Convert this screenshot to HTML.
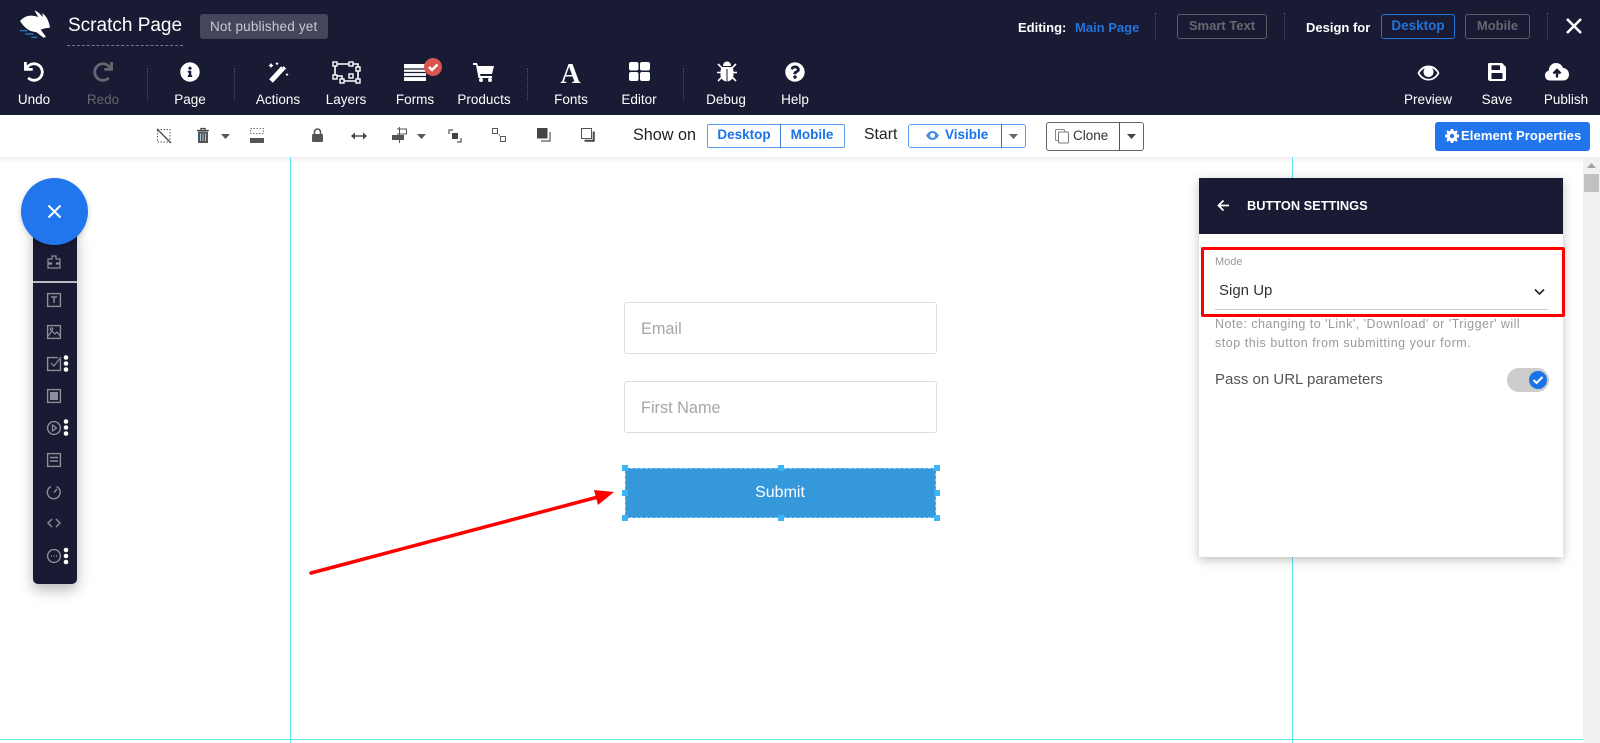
<!DOCTYPE html>
<html><head><meta charset="utf-8"><style>
html,body{margin:0;padding:0;width:1600px;height:743px;overflow:hidden;background:#fff;font-family:"Liberation Sans",sans-serif}
.a{position:absolute}
.t{position:absolute;white-space:nowrap;line-height:1}
.c{transform:translateX(-50%)}
.l{top:93px;font-size:13.5px;color:#fff;transform:translateX(-50%);position:absolute;white-space:nowrap;line-height:14px}
.sep{position:absolute;width:0;border-left:1px dotted #4f5066}
svg{position:absolute;overflow:visible}
.btn{position:absolute;box-sizing:border-box;border-radius:3px;text-align:center;font-weight:bold;white-space:nowrap}
</style></head><body>
<!-- top bar -->
<div class="a" style="left:0;top:0;width:1600px;height:115px;background:#191a33"></div>
<svg style="left:10px;top:5px" width="50" height="40" viewBox="0 0 150 120"><path d="M30 48C45 32 60 28 85 36C80 28 76 22 74 16C84 20 92 28 98 36C98 30 98 28 96 24C106 30 114 42 118 58L120 68L104 70L92 74C98 82 104 90 108 96L100 98L80 82L62 78C48 72 38 60 30 48Z" fill="#fff"/><path d="M30 77H52M46 87H70M64 97H82" stroke="#1f8fe0" stroke-width="3.5"/></svg>
<div class="t" style="left:68px;top:16px;font-size:19px;color:#fff">Scratch Page</div>
<div class="a" style="left:67px;top:45px;width:116px;border-top:1px dashed #77788a"></div>
<div class="a" style="left:200px;top:14px;width:128px;height:25px;background:#44465c;border-radius:3px"></div>
<div class="t" style="left:210px;top:19.5px;font-size:13.5px;color:#c8c9d2;letter-spacing:.18px">Not published yet</div>

<div class="t" style="left:1018px;top:21px;font-size:13px;font-weight:bold;color:#fff">Editing:</div>
<div class="t" style="left:1075px;top:21px;font-size:13px;font-weight:bold;color:#2274d8">Main Page</div>
<div class="sep" style="left:1155px;top:13px;height:26px"></div>
<div class="btn" style="left:1177px;top:14px;width:90px;height:25px;border:1px solid #5b5c66;color:#666770;font-size:13px;line-height:21px">Smart Text</div>
<div class="sep" style="left:1284px;top:13px;height:26px"></div>
<div class="t" style="left:1306px;top:21px;font-size:13px;font-weight:bold;color:#fff">Design for</div>
<div class="btn" style="left:1381px;top:14px;width:74px;height:25px;border:1px solid #2274d8;color:#2274d8;font-size:13.5px;line-height:21px">Desktop</div>
<div class="btn" style="left:1465px;top:14px;width:65px;height:25px;border:1px solid #5b5c66;color:#666770;font-size:13px;line-height:21px">Mobile</div>
<div class="sep" style="left:1547px;top:13px;height:26px"></div>
<svg style="left:1565px;top:17px" width="18" height="18"><path d="M2 2L16 16M16 2L2 16" stroke="#fff" stroke-width="2.6"/></svg>

<!-- toolbar icons -->
<svg style="left:24px;top:62px" width="20" height="20" viewBox="0 0 512 512"><path fill="#fff" d="M212.333 224.333H12c-6.627 0-12-5.373-12-12V12C0 5.373 5.373 0 12 0h48c6.627 0 12 5.373 12 12v78.112C117.773 39.279 184.26 7.47 258.175 8.007c136.906.994 246.448 111.623 246.157 248.532C504.041 393.258 393.12 504 256.333 504c-64.089 0-122.496-24.313-166.51-64.215-5.099-4.622-5.334-12.554-.467-17.42l33.967-33.967c4.474-4.474 11.662-4.717 16.401-.525C170.76 415.336 211.58 432 256.333 432c97.268 0 176-78.716 176-176 0-97.267-78.716-176-176-176-58.496 0-110.28 28.476-142.274 72.333h98.274c6.627 0 12 5.373 12 12v48c0 6.627-5.373 12-12 12z"/></svg>
<svg style="left:93px;top:62px;transform:scaleX(-1)" width="20" height="20" viewBox="0 0 512 512"><path fill="#66676f" d="M212.333 224.333H12c-6.627 0-12-5.373-12-12V12C0 5.373 5.373 0 12 0h48c6.627 0 12 5.373 12 12v78.112C117.773 39.279 184.26 7.47 258.175 8.007c136.906.994 246.448 111.623 246.157 248.532C504.041 393.258 393.12 504 256.333 504c-64.089 0-122.496-24.313-166.51-64.215-5.099-4.622-5.334-12.554-.467-17.42l33.967-33.967c4.474-4.474 11.662-4.717 16.401-.525C170.76 415.336 211.58 432 256.333 432c97.268 0 176-78.716 176-176 0-97.267-78.716-176-176-176-58.496 0-110.28 28.476-142.274 72.333h98.274c6.627 0 12 5.373 12 12v48c0 6.627-5.373 12-12 12z"/></svg>
<div class="sep" style="left:147px;top:68px;height:32px"></div>
<svg style="left:180px;top:62px" width="20" height="20" viewBox="0 0 512 512"><path fill="#fff" d="M256 8C119.043 8 8 119.083 8 256c0 136.997 111.043 248 248 248s248-111.003 248-248C504 119.083 392.957 8 256 8zm0 110c23.196 0 42 18.804 42 42s-18.804 42-42 42-42-18.804-42-42 18.804-42 42-42zm56 254c0 6.627-5.373 12-12 12h-88c-6.627 0-12-5.373-12-12v-24c0-6.627 5.373-12 12-12h12v-64h-12c-6.627 0-12-5.373-12-12v-24c0-6.627 5.373-12 12-12h64c6.627 0 12 5.373 12 12v100h12c6.627 0 12 5.373 12 12v24z"/></svg>
<div class="sep" style="left:234px;top:68px;height:32px"></div>
<svg style="left:268px;top:61px" width="21" height="21"><path d="M3 20L15 7" stroke="#fff" stroke-width="5"/><path d="M13 9.5L15.5 5L18.5 8Z" fill="#fff"/><path d="M3 2l1 1.5 1.5 1-1.5 1L3 7 2 5.5.5 4.5 2 3.5ZM9 1l.7 1 1 .7-1 .7-.7 1-.7-1-1-.7 1-.7ZM19 12l.6 1 1 .6-1 .6-.6 1-.6-1-1-.6 1-.6Z" fill="#fff"/></svg>
<svg style="left:332px;top:61px" width="30" height="23" fill="none"><path d="M3 3H26V14M3 3V15H10V20H26V8" stroke="#fff" stroke-width="1.6" fill="none"/><g fill="#191a33" stroke="#fff" stroke-width="1.4"><rect x="1" y="1" width="4" height="4"/><rect x="17" y="1" width="4" height="4"/><rect x="1" y="14" width="4" height="4"/><rect x="24" y="6" width="4" height="4"/><rect x="24" y="18" width="4" height="4"/><rect x="8" y="18" width="4" height="4"/><rect x="17" y="13" width="4" height="4"/></g></svg>
<svg style="left:404px;top:58px" width="38" height="25"><path fill="#fff" d="M0 6H22V23H0Z"/><path d="M0 11H22M0 14.5H22M0 18.5H22" stroke="#191a33" stroke-width="1.2"/><circle cx="29" cy="9" r="9" fill="#d9534f"/><path d="M25 9L28 12L33.5 6.5" stroke="#fff" stroke-width="2.4" fill="none"/></svg>
<svg style="left:473px;top:63px" width="21" height="19" viewBox="0 0 21 19"><path fill="#fff" d="M0 0H4L5 3H21L19 11H7L7.5 13H19V15H5.5L3 2H0Z"/><circle cx="8" cy="17" r="2" fill="#fff"/><circle cx="17" cy="17" r="2" fill="#fff"/></svg>
<div class="sep" style="left:527px;top:68px;height:32px"></div>
<div class="t" style="left:560px;top:59px;font:bold 28px 'Liberation Serif',serif;color:#fff;width:21px;text-align:center">A</div>
<svg style="left:629px;top:62px" width="21" height="19"><rect x="0" y="0" width="9.5" height="8.5" rx="2" fill="#fff"/><rect x="11" y="0" width="10" height="8.5" rx="2" fill="#fff"/><rect x="0" y="10" width="9.5" height="9" rx="2" fill="#fff"/><rect x="11" y="10" width="10" height="9" rx="2" fill="#fff"/></svg>
<div class="sep" style="left:683px;top:68px;height:32px"></div>
<svg style="left:717px;top:61px" width="20" height="21" viewBox="0 0 20 21"><path fill="#fff" d="M6 5C6 2 8 .5 10 .5S14 2 14 5ZM5 6H15C16 7 16.5 9 16.5 11V14C16.5 17 14 20 10.5 20.5V8H9.5V20.5C6 20 3.5 17 3.5 14V11C3.5 9 4 7 5 6Z"/><path d="M1 3L5 7M19 3L15 7M0 11.5H4M20 11.5H16M1 20L5 16M19 20L15 16" stroke="#fff" stroke-width="1.6"/></svg>
<svg style="left:785px;top:62px" width="20" height="20" viewBox="0 0 512 512"><path fill="#fff" d="M504 256c0 136.997-111.043 248-248 248S8 392.997 8 256C8 119.083 119.043 8 256 8s248 111.083 248 248zM262.655 90c-54.497 0-89.255 22.957-116.549 63.758-3.536 5.286-2.353 12.415 2.715 16.258l34.699 26.31c5.205 3.947 12.621 3.008 16.665-2.122 17.864-22.658 30.113-35.797 57.303-35.797 20.429 0 45.698 13.148 45.698 32.958 0 14.976-12.363 22.667-32.534 33.976C247.128 238.528 216 254.941 216 296v4c0 6.627 5.373 12 12 12h56c6.627 0 12-5.373 12-12v-1.333c0-28.462 83.186-29.647 83.186-106.667 0-58.002-60.165-102-116.531-102zM256 338c-25.365 0-46 20.635-46 46 0 25.364 20.635 46 46 46s46-20.636 46-46c0-25.365-20.635-46-46-46z"/></svg>
<svg style="left:1417px;top:65px" width="23" height="16" viewBox="0 0 23 16"><path fill="#fff" fill-rule="evenodd" d="M.5 8C3 3 7 .5 11.5 .5S20 3 22.5 8C20 13 16 15.5 11.5 15.5S3 13 .5 8ZM2.5 8C5 12 8 13.8 11.5 13.8S18 12 20.5 8C18.8 5.5 17 4 15 3C16 4 16.5 5.5 16.5 7C16.5 10 14.3 12 11.5 12S6.5 10 6.5 7C6.5 5.5 7 4 8 3C6 4 4.2 5.5 2.5 8Z"/><path d="M9 5A3.5 3.5 0 0 1 11 3.5" stroke="#fff" stroke-width="1.2" fill="none"/></svg>
<svg style="left:1487px;top:62px" width="20" height="20" viewBox="0 0 20 20"><path fill="#fff" fill-rule="evenodd" d="M2 1H15L19 5V17C19 18 18 19 17 19H3C2 19 1 18 1 17V2C1 1.5 1.5 1 2 1ZM4.5 3.3V8H13V3.3ZM4.5 11V17H15.5V11Z"/></svg>
<svg style="left:1545px;top:62px" width="24" height="20" viewBox="0 0 24 20"><path fill="#fff" d="M5 18.5C2 18.5 0 16.5 0 13.5C0 11 1.5 9.3 3.7 8.8C3.6 5 6.5 1 11 1C14.5 1 17 3 18 6C21.5 6 24 9 24 12.5C24 16 21.5 18.5 18.5 18.5Z"/><path d="M12 15.5V8.5M8.5 11.5L12 8L15.5 11.5" stroke="#191a33" stroke-width="2.4" fill="none"/></svg>

<div class="l" style="left:34px">Undo</div>
<div class="l" style="left:103px;color:#64656d">Redo</div>
<div class="l" style="left:190px">Page</div>
<div class="l" style="left:278px">Actions</div>
<div class="l" style="left:346px">Layers</div>
<div class="l" style="left:415px">Forms</div>
<div class="l" style="left:484px">Products</div>
<div class="l" style="left:571px">Fonts</div>
<div class="l" style="left:639px">Editor</div>
<div class="l" style="left:726px">Debug</div>
<div class="l" style="left:795px">Help</div>
<div class="l" style="left:1428px">Preview</div>
<div class="l" style="left:1497px">Save</div>
<div class="l" style="left:1566px">Publish</div>

<!-- second toolbar -->
<div class="a" style="left:0;top:115px;width:1600px;height:42px;background:#fff"></div>
<div class="a" style="left:0;top:157px;width:1600px;height:6px;background:linear-gradient(#efefef,#fff)"></div>
<svg style="left:157px;top:129px" width="14" height="14" fill="none"><rect x=".5" y=".5" width="12.5" height="12.5" stroke="#555" stroke-dasharray="1.5 1.5"/><path d="M0 0L14 14" stroke="#555" stroke-width="1.5"/></svg>
<svg style="left:197px;top:128px" width="12" height="15"><path d="M0 2.5H12M4 2V.5H8V2" stroke="#444" stroke-width="1.3" fill="none"/><path d="M1 3.5H11V15H1Z" fill="#555"/><path d="M3.5 5.5V13M6 5.5V13M8.5 5.5V13" stroke="#9ec5e0" stroke-width="1"/></svg>
<svg style="left:221px;top:134px" width="9" height="5"><path d="M0 0H9L4.5 5Z" fill="#555"/></svg>
<svg style="left:250px;top:128px" width="14" height="15" fill="none"><rect x=".5" y=".5" width="13" height="5" stroke="#777" stroke-dasharray="1.5 1.5"/><rect y="10" width="14" height="5" fill="#555"/></svg>
<svg style="left:312px;top:128px" width="11" height="14"><path d="M2.5 6V4A3 3 0 0 1 8.5 4V6" stroke="#555" stroke-width="1.6" fill="none"/><rect y="6" width="11" height="8" rx="1" fill="#555"/></svg>
<svg style="left:351px;top:132px" width="16" height="8"><path d="M2 4H14" stroke="#444" stroke-width="1.4"/><path d="M0 4L4 .5V7.5ZM16 4L12 .5V7.5Z" fill="#444"/></svg>
<svg style="left:392px;top:127px" width="15" height="16" fill="none"><path d="M7.5 0V16" stroke="#555"/><rect x="0" y="8" width="12" height="5" fill="#555"/><path d="M5 2H14.5V7H5" stroke="#555"/></svg>
<svg style="left:417px;top:134px" width="9" height="5"><path d="M0 0H9L4.5 5Z" fill="#555"/></svg>
<svg style="left:448px;top:129px" width="14" height="14" fill="none"><path d="M1 5V1H5M13 9V13H9" stroke="#555" stroke-width="1.2"/><rect x="4" y="4" width="6" height="6" fill="#444"/></svg>
<svg style="left:492px;top:128px" width="14" height="14" fill="none"><rect x=".5" y=".5" width="5" height="5" stroke="#555"/><rect x="8.5" y="8.5" width="5" height="5" stroke="#555"/><path d="M7 6V7M7 7H8" stroke="#555"/></svg>
<svg style="left:537px;top:128px" width="14" height="14" fill="none"><rect width="10.5" height="10.5" fill="#444"/><path d="M13 4V13H4" stroke="#555" stroke-width="1.2"/></svg>
<svg style="left:581px;top:128px" width="14" height="14" fill="none"><rect x=".5" y=".5" width="10" height="10" stroke="#555"/><path d="M12.7 3.5V12.7H3.5" stroke="#444" stroke-width="2"/></svg>

<div class="t" style="left:633px;top:127px;font-size:16.2px;color:#222">Show on</div>
<div class="a" style="left:707px;top:124px;width:138px;height:24px;box-sizing:border-box;border:1px solid #5c9cf0;border-radius:2px"></div>
<div class="a" style="left:780px;top:124px;width:1px;height:24px;background:#3b7fd8"></div>
<div class="t c" style="left:744px;top:128px;font-size:13.5px;font-weight:bold;color:#1a73e8">Desktop</div>
<div class="t c" style="left:812px;top:128px;font-size:13.5px;font-weight:bold;color:#1a73e8">Mobile</div>
<div class="t" style="left:864px;top:127px;font-size:15.8px;color:#222">Start</div>
<div class="a" style="left:908px;top:124px;width:118px;height:24px;box-sizing:border-box;border:1px solid #5c9cf0;border-radius:3px"></div>
<div class="a" style="left:1001px;top:124px;width:1px;height:24px;background:#4a6a9a"></div>
<svg style="left:926px;top:131px" width="13" height="9"><path fill-rule="evenodd" fill="#4a90e2" d="M0 4.5C2 1.5 4 0 6.5 0S11 1.5 13 4.5C11 7.5 9 9 6.5 9S2 7.5 0 4.5ZM6.5 2A2.5 2.5 0 1 0 6.5 7A2.5 2.5 0 1 0 6.5 2Z"/></svg>
<div class="t" style="left:945px;top:128px;font-size:13.5px;font-weight:bold;color:#1a73e8">Visible</div>
<svg style="left:1009px;top:134px" width="9" height="5"><path d="M0 0H9L4.5 5Z" fill="#666"/></svg>
<div class="a" style="left:1046px;top:122px;width:98px;height:29px;box-sizing:border-box;border:1px solid #666;border-radius:3px"></div>
<div class="a" style="left:1119px;top:122px;width:1px;height:29px;background:#555"></div>
<svg style="left:1055px;top:129px" width="14" height="15" fill="none"><rect x=".5" y=".5" width="9" height="11" stroke="#888" rx="1"/><rect x="3.5" y="3" width="10" height="11" fill="#fff" stroke="#777" rx="1"/></svg>
<div class="t" style="left:1073px;top:129px;font-size:13.5px;color:#333">Clone</div>
<svg style="left:1127px;top:134px" width="9" height="5"><path d="M0 0H9L4.5 5Z" fill="#444"/></svg>
<div class="a" style="left:1435px;top:122px;width:155px;height:29px;background:#2176ee;border-radius:3px"></div>
<svg style="left:1445px;top:129px" width="14" height="14" viewBox="0 0 14 14"><path fill="#fff" fill-rule="evenodd" d="M5.8 0H8.2L8.6 1.9 9.7 2.4 11.4 1.3 12.7 2.6 11.6 4.3 12.1 5.4 14 5.8V8.2L12.1 8.6 11.6 9.7 12.7 11.4 11.4 12.7 9.7 11.6 8.6 12.1 8.2 14H5.8L5.4 12.1 4.3 11.6 2.6 12.7 1.3 11.4 2.4 9.7 1.9 8.6 0 8.2V5.8L1.9 5.4 2.4 4.3 1.3 2.6 2.6 1.3 4.3 2.4 5.4 1.9ZM7 4.8A2.2 2.2 0 1 0 7 9.2A2.2 2.2 0 1 0 7 4.8Z"/></svg>
<div class="t" style="left:1461px;top:129px;font-size:13px;font-weight:bold;color:#fff;letter-spacing:.1px">Element Properties</div>

<!-- guides -->
<div class="a" style="left:290px;top:157px;width:1px;height:586px;background:#62e6ee"></div>
<div class="a" style="left:1292px;top:157px;width:1px;height:586px;background:#62e6ee"></div>
<div class="a" style="left:0;top:739px;width:1600px;height:1px;background:#62e6ee"></div>

<!-- scrollbar -->
<div class="a" style="left:1583px;top:157px;width:17px;height:586px;background:#f1f1f1"></div>
<svg style="left:1587px;top:163px" width="9" height="5"><path d="M0 5H9L4.5 0Z" fill="#a3a3a3"/></svg>
<div class="a" style="left:1584px;top:174px;width:15px;height:18px;background:#c1c1c1"></div>

<!-- side rail -->
<div class="a" style="left:33px;top:230px;width:44px;height:354px;background:#191a33;border-radius:0 0 5px 5px;box-shadow:0 6px 14px rgba(0,0,0,.28)"></div>
<div class="a" style="left:33px;top:281px;width:44px;height:2px;background:#bbb"></div>
<div class="a" style="left:21px;top:178px;width:67px;height:67px;border-radius:50%;background:#2176ee;box-shadow:0 2px 6px rgba(0,0,0,.2)"></div>
<svg style="left:47px;top:204px" width="15" height="15"><path d="M1.5 1.5L13.5 13.5M13.5 1.5L1.5 13.5" stroke="#fff" stroke-width="2"/></svg>
<svg style="left:47px;top:255px" width="14" height="300" fill="none" stroke="#8e8e9a" stroke-width="1.2">
<path d="M5 1H9V4H13V8H9.5V9H13V13H1V9H4.5V8H1V4H5Z"/>
<rect x=".6" y="38.6" width="12.8" height="12.8" stroke-width="1.4"/><path d="M4 42H10M7 42V48" stroke-width="1.5"/>
<rect x=".6" y="70.6" width="12.8" height="12.8" stroke-width="1.4"/><path d="M1 81L5 76L8 79L10 77L13 81"/><circle cx="4.5" cy="74" r="1.2"/>
<path d="M13.4 104V115.4H.6V102.6H11" stroke-width="1.4"/><path d="M4 108L7 111L14 102"/>
<rect x=".6" y="134.6" width="12.8" height="12.8" stroke-width="1.4"/><rect x="3" y="137" width="8" height="8" fill="#8e8e9a" stroke="none"/>
<circle cx="7" cy="173" r="6.4" stroke-width="1.4"/><path d="M5.5 170L9.5 173L5.5 176Z"/>
<rect x=".6" y="198.6" width="12.8" height="12.8" stroke-width="1.4"/><path d="M3 202.5H11M3 206H11" stroke-width="1.4"/>
<path d="M9.5 231.5A6.4 6.4 0 1 1 4 231.5M7 237.5L10 234" stroke-width="1.4"/>
<path d="M5 264L1 268L5 272M9 264L13 268L9 272" stroke-width="1.4"/>
<circle cx="7" cy="301" r="6.4" stroke-width="1.4"/><path d="M4 301H5M6.5 301H7.5M9 301H10" stroke-width="1.6"/>
</svg>
<svg style="left:63px;top:355px" width="6" height="212" fill="#fff"><circle cx="3" cy="2.5" r="2.3"/><circle cx="3" cy="8.5" r="2.3"/><circle cx="3" cy="14.5" r="2.3"/><circle cx="3" cy="66.5" r="2.3"/><circle cx="3" cy="72.5" r="2.3"/><circle cx="3" cy="78.5" r="2.3"/><circle cx="3" cy="195" r="2.3"/><circle cx="3" cy="201" r="2.3"/><circle cx="3" cy="207" r="2.3"/></svg>

<!-- form -->
<div class="a" style="left:624px;top:302px;width:313px;height:52px;box-sizing:border-box;border:1px solid #ddd;border-radius:3px;background:#fff"></div>
<div class="t" style="left:641px;top:321px;font-size:16.3px;color:#a6a6a6">Email</div>
<div class="a" style="left:624px;top:381px;width:313px;height:52px;box-sizing:border-box;border:1px solid #ddd;border-radius:3px;background:#fff"></div>
<div class="t" style="left:641px;top:399.5px;font-size:16.3px;color:#a6a6a6">First Name</div>
<div class="a" style="left:625px;top:468px;width:311px;height:50px;box-sizing:border-box;background:#3498db;border:1px dashed #7fd0ff"></div>
<div class="t c" style="left:780px;top:485px;font-size:16px;color:#fff">Submit</div>
<svg style="left:620px;top:463px" width="322" height="60" fill="#3cb4f5"><rect x="2" y="2" width="6" height="6"/><rect x="158" y="2" width="6" height="6"/><rect x="314" y="2" width="6" height="6"/><rect x="2" y="27" width="6" height="6"/><rect x="314" y="27" width="6" height="6"/><rect x="2" y="52" width="6" height="6"/><rect x="158" y="52" width="6" height="6"/><rect x="314" y="52" width="6" height="6"/></svg>

<!-- arrow -->
<svg style="left:0;top:0" width="1600" height="743"><path d="M311 573L598 497" stroke="#f00" stroke-width="3.5" stroke-linecap="round"/><path d="M614 492L594 490L598 505Z" fill="#f00"/></svg>

<!-- panel -->
<div class="a" style="left:1199px;top:178px;width:364px;height:379px;background:#fff;box-shadow:0 3px 10px rgba(0,0,0,.25)"></div>
<div class="a" style="left:1199px;top:178px;width:364px;height:56px;background:#191a33"></div>
<svg style="left:1217px;top:199px" width="13" height="13"><path d="M12 6.5H2M6.5 1.5L1.5 6.5L6.5 11.5" stroke="#fff" stroke-width="1.8" fill="none"/></svg>
<div class="t" style="left:1247px;top:200px;font-size:12.8px;font-weight:bold;color:#fff">BUTTON SETTINGS</div>
<div class="a" style="left:1201px;top:247px;width:364px;height:70px;box-sizing:border-box;border:3.5px solid #f00;border-radius:2px"></div>
<div class="t" style="left:1215px;top:257px;font-size:11px;color:#9a9a9a">Mode</div>
<div class="t" style="left:1219px;top:283px;font-size:15px;color:#333">Sign Up</div>
<svg style="left:1534px;top:288px" width="11" height="8"><path d="M1 1.5L5.5 6L10 1.5" stroke="#222" stroke-width="1.6" fill="none"/></svg>
<div class="a" style="left:1215px;top:309px;width:333px;height:1px;background:#ccc"></div>
<div class="t" style="left:1215px;top:318px;font-size:12.5px;color:#9a9a9a;letter-spacing:.48px">Note: changing to 'Link', 'Download' or 'Trigger' will</div>
<div class="t" style="left:1215px;top:337px;font-size:12.5px;color:#9a9a9a;letter-spacing:.53px">stop this button from submitting your form.</div>
<div class="t" style="left:1215px;top:372px;font-size:15px;color:#555">Pass on URL parameters</div>
<div class="a" style="left:1507px;top:368px;width:42px;height:24px;border-radius:12px;background:#ccc"></div>
<div class="a" style="left:1529px;top:371px;width:18px;height:18px;border-radius:50%;background:#1a73e8"></div>
<svg style="left:1532px;top:375px" width="12" height="10"><path d="M1.5 5L4.5 8L10.5 2" stroke="#fff" stroke-width="2" fill="none"/></svg>
</body></html>
